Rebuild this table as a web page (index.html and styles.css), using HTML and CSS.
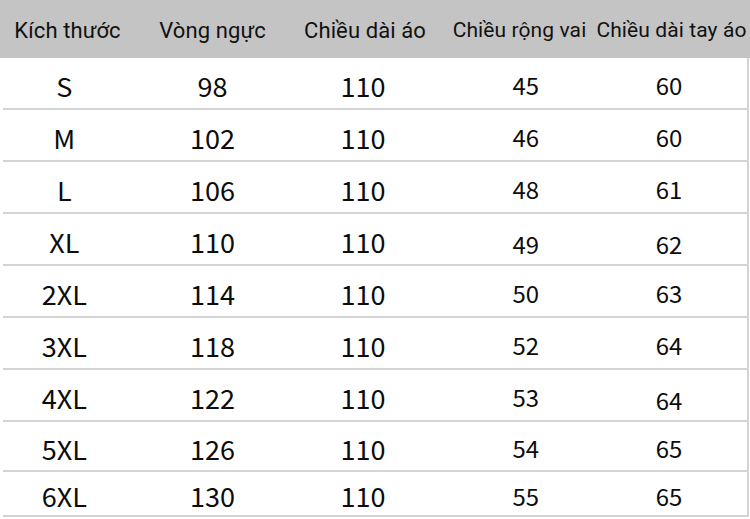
FILE: index.html
```html
<!DOCTYPE html>
<html lang="vi">
<head>
<meta charset="utf-8">
<title>Bảng kích thước</title>
<link rel="stylesheet" href="styles.css">
</head>
<body>
<div class="chart">
  <div class="head">
    <div class="hc">Kích thước</div>
    <div class="hc">Vòng ngực</div>
    <div class="hc">Chiều dài áo</div>
    <div class="hc">Chiều rộng vai</div>
    <div class="hc">Chiều dài tay áo</div>
  </div>
  <div class="body">
    <div class="row"><div class="c">S</div><div class="c">98</div><div class="c">110</div><div class="c sm c4">45</div><div class="c sm c5">60</div></div>
    <div class="row"><div class="c">M</div><div class="c">102</div><div class="c">110</div><div class="c sm c4">46</div><div class="c sm c5">60</div></div>
    <div class="row"><div class="c">L</div><div class="c">106</div><div class="c">110</div><div class="c sm c4">48</div><div class="c sm c5">61</div></div>
    <div class="row"><div class="c">XL</div><div class="c">110</div><div class="c">110</div><div class="c sm c4 low">49</div><div class="c sm c5 low">62</div></div>
    <div class="row"><div class="c">2XL</div><div class="c">114</div><div class="c">110</div><div class="c sm c4">50</div><div class="c sm c5">63</div></div>
    <div class="row"><div class="c">3XL</div><div class="c">118</div><div class="c">110</div><div class="c sm c4">52</div><div class="c sm c5">64</div></div>
    <div class="row"><div class="c">4XL</div><div class="c">122</div><div class="c">110</div><div class="c sm c4">53</div><div class="c sm c5 low">64</div></div>
    <div class="row r8"><div class="c">5XL</div><div class="c">126</div><div class="c">110</div><div class="c sm c4">54</div><div class="c sm c5">65</div></div>
    <div class="row r9"><div class="c">6XL</div><div class="c">130</div><div class="c">110</div><div class="c sm c4">55</div><div class="c sm c5">65</div></div>
  </div>
</div>
</body>
</html>
```
FILE: styles.css
```css
* { box-sizing: border-box; }
html, body { margin: 0; padding: 0; background: #ffffff; }
body { width: 750px; height: 519px; overflow: hidden; }

.chart { width: 750px; }

.head {
  display: grid;
  grid-template-columns: 135px 155px 150px 155px 155px;
  height: 58px;
  background: #c4c4c4;
  align-items: center;
}
.hc {
  font-family: Roboto, "Liberation Sans", sans-serif;
  font-size: 22px;
  letter-spacing: 0.1px;
  color: #111111;
  text-align: center;
  white-space: nowrap;
  padding-top: 2px;
}
.hc:nth-child(4) { font-size: 21px; padding-left: 4px; }
.hc:nth-child(5) { font-size: 21px; padding-right: 2px; }

.body {
  margin-left: 3px;
  width: 746px;
  border-right: 2px solid #d4d4d4;
}
.row {
  display: grid;
  grid-template-columns: 132px 155px 150px 155px 152px;
  height: 52px;
  border-bottom: 2px solid #d4d4d4;
  align-items: center;
}
.row.r8 { height: 50px; }
.row.r9 { height: 45px; }

.c {
  font-family: "Noto Sans CJK SC", "Noto Sans", sans-serif;
  font-size: 26px;
  color: #0c0c0c;
  text-align: center;
  padding-top: 4px;
  transform: scaleX(1.04);
}
.c:first-child { padding-right: 9px; }
.c:nth-child(3) { padding-right: 4px; }
.c.sm { font-size: 23px; }
.c4 { padding-left: 16px; }
.c5 { padding-right: 4px; }
.c.low { padding-top: 10px; }
```
